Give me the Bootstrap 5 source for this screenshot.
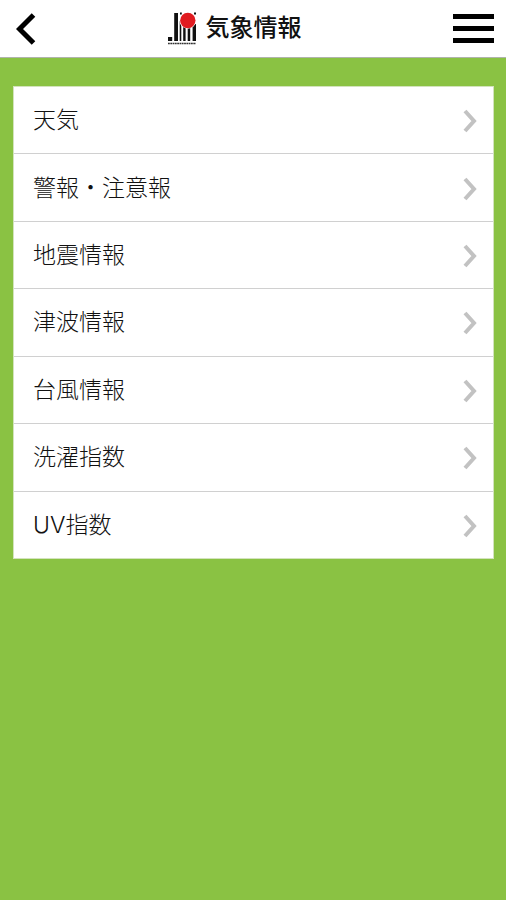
<!DOCTYPE html>
<html lang="ja">
<head>
<meta charset="utf-8">
<meta name="viewport" content="width=device-width, initial-scale=1">
<title>気象情報</title>
<link href="https://cdn.jsdelivr.net/npm/bootstrap@5.3.0/dist/css/bootstrap.min.css" rel="stylesheet">
<style>
body { background: #8ac243; color: #111; font-family: Inter, "Noto Sans CJK JP", sans-serif; }
.topbar { min-height: 58px; border-bottom: 1px solid #b0b4ac; }
.topbar h1 { font-size: 24px; line-height: 32px; font-weight: 500; padding-bottom: 2px; }
.brand { padding-right: 20px; }
.tool { line-height: 0; }
.menu-list { min-height: 473px; margin: 28px 12px 0 13px; border: 1px solid #d3e3bd; }
.menu-list a { color: #111; font-size: 23px; line-height: 32px; font-weight: 300; padding: 2px 16px 0 19px; }
.menu-list span { padding-bottom: 2px; }
.menu-list li + li { border-top: 1px solid #d0d0d0; }
</style>
</head>
<body>
<header class="topbar bg-white d-flex align-items-center justify-content-between">
  <button type="button" class="tool btn border-0 p-0 ps-3" aria-label="戻る">
    <svg width="20" height="34" viewBox="0 0 20 34" fill="none" stroke="#000" stroke-width="5"><path d="M17.500 3 3.500 17l14 14"/></svg>
  </button>
  <div class="brand d-flex align-items-center">
    <svg class="me-2" width="30" height="34" viewBox="0 0 30 34" aria-hidden="true">
      <g fill="#111">
        <path d="M0 25h4.200v4H0zM6.200 1H10v28H6.200zM11.700 9h1.600v20h-1.600zM15.200 12h2.400v17h-2.400zM19.700 14h2.500v15h-2.500zM24.600 12H28v17h-3.400zM12 .5h1.800v2H12zM26 .5h2v2h-2z"/>
      </g>
      <circle cx="19.800" cy="8.500" r="8.300" fill="#fff"/>
      <circle cx="19.800" cy="8.500" r="7.700" fill="#e01b20"/>
      <path d="M0 31.500h28" stroke="#333" stroke-width="1.400" stroke-dasharray="1.800 .5"/>
    </svg>
    <h1 class="m-0">気象情報</h1>
  </div>
  <button type="button" class="tool btn border-0 p-0 pe-2 me-1" aria-label="メニュー">
    <svg width="41" height="29" viewBox="0 0 41 29"><path d="M0 0h41v5H0zM0 12h41v5H0zM0 24h41v5H0z"/></svg>
  </button>
</header>
<svg class="d-none"><symbol id="chevron" viewBox="0 0 14 24"><path d="M2 2l9 10-9 10" fill="none" stroke="#c2c2c2" stroke-width="4"/></symbol></svg>
<main>
  <ul class="menu-list list-unstyled bg-white d-flex flex-column">
    <li class="d-flex flex-fill"><a href="#" class="d-flex flex-fill align-items-center justify-content-between text-decoration-none"><span>天気</span><svg width="14" height="24" aria-hidden="true"><use href="#chevron"/></svg></a></li>
    <li class="d-flex flex-fill"><a href="#" class="d-flex flex-fill align-items-center justify-content-between text-decoration-none"><span>警報・注意報</span><svg width="14" height="24" aria-hidden="true"><use href="#chevron"/></svg></a></li>
    <li class="d-flex flex-fill"><a href="#" class="d-flex flex-fill align-items-center justify-content-between text-decoration-none"><span>地震情報</span><svg width="14" height="24" aria-hidden="true"><use href="#chevron"/></svg></a></li>
    <li class="d-flex flex-fill"><a href="#" class="d-flex flex-fill align-items-center justify-content-between text-decoration-none"><span>津波情報</span><svg width="14" height="24" aria-hidden="true"><use href="#chevron"/></svg></a></li>
    <li class="d-flex flex-fill"><a href="#" class="d-flex flex-fill align-items-center justify-content-between text-decoration-none"><span>台風情報</span><svg width="14" height="24" aria-hidden="true"><use href="#chevron"/></svg></a></li>
    <li class="d-flex flex-fill"><a href="#" class="d-flex flex-fill align-items-center justify-content-between text-decoration-none"><span>洗濯指数</span><svg width="14" height="24" aria-hidden="true"><use href="#chevron"/></svg></a></li>
    <li class="d-flex flex-fill"><a href="#" class="d-flex flex-fill align-items-center justify-content-between text-decoration-none"><span>UV指数</span><svg width="14" height="24" aria-hidden="true"><use href="#chevron"/></svg></a></li>
  </ul>
</main>
<script src="https://cdn.jsdelivr.net/npm/bootstrap@5.3.0/dist/js/bootstrap.bundle.min.js"></script>
</body>
</html>
